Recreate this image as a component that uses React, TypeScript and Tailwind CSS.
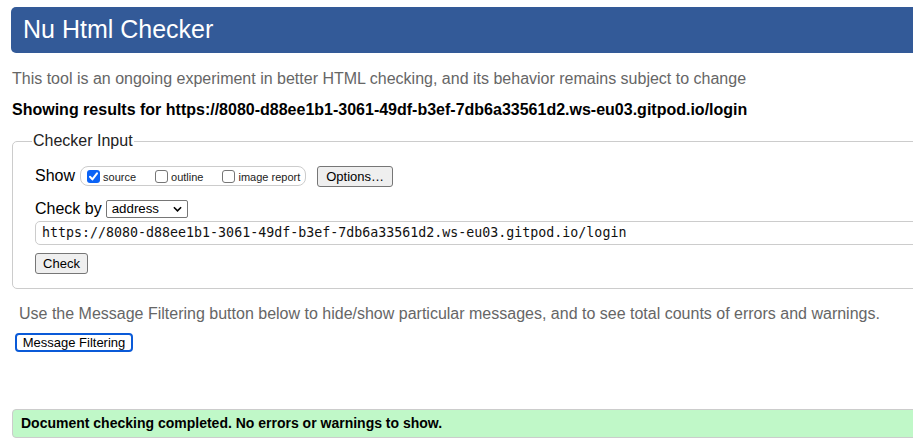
import React from "react";

const Check = () => (
  <svg viewBox="0 0 13 13" className="w-[13px] h-[13px]">
    <rect x="0" y="0" width="13" height="13" rx="3" fill="#0b63f6" />
    <path d="M3 6.8 L5.4 9.4 L10 3.4" fill="none" stroke="#fff" strokeWidth="2" strokeLinecap="round" strokeLinejoin="round" />
  </svg>
);

const Box = () => (
  <span className="inline-block w-[13px] h-[13px] rounded-[3px] border border-[#767676] bg-white" />
);

const Option = ({ label, checked }: { label: string; checked?: boolean }) => (
  <label className="flex items-center gap-[3px] text-[11px] text-[#222]">
    {checked ? <Check /> : <Box />}
    <span className="mt-[2px]">{label}</span>
  </label>
);

export default function App() {
  return (
    <div className="w-[913px] h-[445px] overflow-hidden bg-white font-['Liberation_Sans',Arial,sans-serif] text-black">
      <div className="w-[1000px] pl-[11px] pt-[7px]">
        <h1 className="h-[46px] rounded-[5px] bg-[#335a98] text-white text-[25px] pl-[12px] flex items-center">
          Nu Html Checker
        </h1>
        <p className="mt-[16px] text-[16px] leading-[20px] text-[#666] pl-[1px]">
          This tool is an ongoing experiment in better HTML checking, and its behavior remains subject to change
        </p>
        <p className="mt-[11px] text-[16px] leading-[20px] font-bold pl-[1px]">
          Showing results for https://8080-d88ee1b1-3061-49df-b3ef-7db6a33561d2.ws-eu03.gitpod.io/login
        </p>
        <fieldset className="mt-[11px] ml-[1px] border border-[#cccccc] rounded-[5px] pl-[22px] pb-[13px]">
          <legend className="ml-[-3px] px-[1px] text-[16px] leading-[20px] text-[#222]">Checker Input</legend>
          <div className="mt-[14px] h-[22px] flex items-center">
            <span className="text-[16px] mr-[5px]">Show</span>
            <div className="h-[20px] border border-[#cccccc] rounded-[8px] flex items-center pl-[6px] pr-[5px] gap-[19px]">
              <Option label="source" checked />
              <Option label="outline" />
              <Option label="image report" />
            </div>
            <button className="ml-[11px] h-[21px] px-[8px] text-[13px] bg-[#efefef] border border-[#767676] rounded-[3px]">
              Options…
            </button>
          </div>
          <div className="mt-[12px] h-[20px] flex items-center">
            <span className="text-[16px] mr-[4px]">Check by</span>
            <div className="h-[18px] w-[82px] border border-[#767676] rounded-[2px] bg-white flex items-center justify-between pl-[5px] pr-[5px] text-[13.3px]">
              <span>address</span>
              <svg viewBox="0 0 10 6" className="w-[9px] h-[6px]">
                <path d="M1 1 L5 5 L9 1" fill="none" stroke="#000" strokeWidth="1.8" />
              </svg>
            </div>
          </div>
          <div className="mt-[2px] h-[24px] border border-[#cccccc] rounded-[5px] flex items-center pl-[6px] font-['DejaVu_Sans_Mono',Menlo,monospace] text-[13.3px] text-[#111]">
            https://8080-d88ee1b1-3061-49df-b3ef-7db6a33561d2.ws-eu03.gitpod.io/login
          </div>
          <button className="mt-[8px] h-[21px] w-[53px] text-[13px] bg-[#efefef] border border-[#767676] rounded-[3px]">
            Check
          </button>
        </fieldset>
        <p className="mt-[15px] ml-[8px] text-[16px] leading-[20px] text-[#666]">
          Use the Message Filtering button below to hide/show particular messages, and to see total counts of errors and warnings.
        </p>
        <button className="mt-[9px] ml-[4px] h-[19px] w-[118px] text-[13px] leading-[15px] bg-white border-2 border-[#0a5ad8] rounded-[4px] block">
          Message Filtering
        </button>
        <div className="mt-[57px] ml-[1px] h-[29px] border border-[#cccccc] rounded-[4px] bg-[#c0f8c8] flex items-center pl-[8px] text-[14px] font-bold">
          Document checking completed. No errors or warnings to show.
        </div>
      </div>
    </div>
  );
}
